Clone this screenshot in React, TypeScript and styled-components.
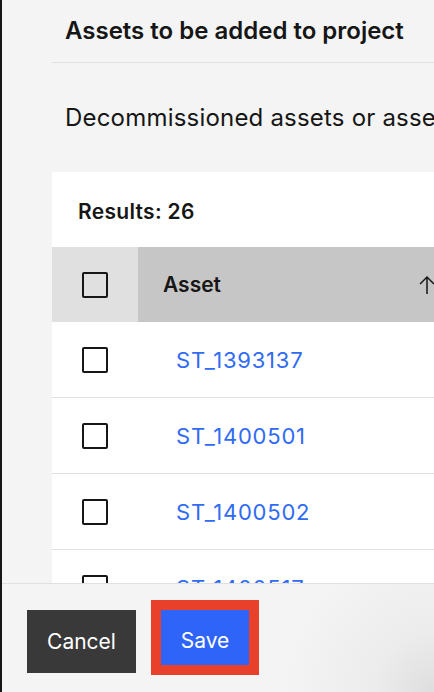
import React from 'react';
import styled, { createGlobalStyle } from 'styled-components';

const GlobalStyle = createGlobalStyle`
  html, body {
    margin: 0;
    padding: 0;
    background: #f4f4f4;
  }
  body {
    font-family: Inter, "Noto Sans", Arial, sans-serif;
    color: #161616;
  }
  * {
    box-sizing: border-box;
  }
`;

const assets = ['ST_1393137', 'ST_1400501', 'ST_1400502', 'ST_1400517'];

const Shell = styled.div`
  display: flex;
  width: 434px;
  height: 692px;
  overflow: hidden;
  background: #f4f4f4;
`;

const Edge = styled.div`
  width: 2px;
  flex: none;
  background: #161616;
`;

const Main = styled.div`
  display: flex;
  flex-direction: column;
  flex: 1;
  min-width: 0;
`;

const Body = styled.div`
  flex: 1;
  overflow: hidden;
  padding-left: 50px;
`;

const Header = styled.div`
  display: flex;
  align-items: center;
  height: 63px;
  padding: 0 0 1px 13px;
  border-bottom: 1px solid #e0e0e0;
`;

const Title = styled.h2`
  margin: 0;
  font-size: 24px;
  font-weight: 600;
  line-height: 30px;
  white-space: nowrap;
`;

const Description = styled.p`
  display: flex;
  align-items: center;
  height: 109px;
  margin: 0;
  padding-left: 13px;
  font-size: 24px;
  font-weight: 400;
  letter-spacing: 0.2px;
  white-space: nowrap;
`;

const Card = styled.div`
  width: 420px;
  background: #ffffff;
`;

const Toolbar = styled.div`
  display: flex;
  align-items: center;
  height: 75px;
  padding: 4px 0 0 26px;
  font-size: 21px;
  font-weight: 600;
  letter-spacing: 0.3px;
`;

const HeaderRow = styled.div`
  display: flex;
  height: 75px;
`;

const Row = styled.div`
  display: flex;
  height: 76px;
  border-bottom: 1px solid #e0e0e0;
`;

const SelectCell = styled.div<{ $head?: boolean }>`
  display: flex;
  align-items: center;
  width: 86px;
  flex: none;
  padding-left: 30px;
  background: ${p => (p.$head ? '#e0e0e0' : 'transparent')};
`;

const SortCell = styled.div`
  display: flex;
  align-items: center;
  flex: 1;
  padding: 0 33px 0 25px;
  background: #c6c6c6;
  font-size: 21px;
  font-weight: 600;
`;

const SortIcon = styled.svg`
  margin-left: auto;
  width: 24px;
  height: 24px;
  fill: #161616;
`;

const LinkCell = styled.div`
  display: flex;
  align-items: center;
  flex: 1;
  padding-left: 38px;
`;

const AssetLink = styled.a`
  color: #2f6bf5;
  font-size: 22px;
  text-decoration: none;
  letter-spacing: 0.8px;
`;

const Checkbox = styled.span`
  display: block;
  width: 26px;
  height: 26px;
  border: 2px solid #161616;
  border-radius: 2px;
`;

const Footer = styled.div`
  display: flex;
  align-items: flex-start;
  height: 109px;
  flex: none;
  padding: 26px 0 0 25px;
  border-top: 1px solid #e0e0e0;
  background: radial-gradient(circle at 100% 100%, #dedede 0, #ececec 60px, #f4f4f4 150px);
`;

const Button = styled.button<{ $kind: 'secondary' | 'primary' }>`
  display: flex;
  align-items: center;
  justify-content: center;
  width: ${p => (p.$kind === 'primary' ? '88px' : '109px')};
  height: ${p => (p.$kind === 'primary' ? '55px' : '63px')};
  border: none;
  border-radius: 0;
  padding: ${p => (p.$kind === 'primary' ? '5px 0 0' : '0')};
  background: ${p => (p.$kind === 'primary' ? '#2e64f7' : '#393939')};
  color: #ffffff;
  font-family: inherit;
  font-size: 21px;
  font-weight: 400;
  cursor: pointer;
`;

const Highlight = styled.div`
  margin: -10px 0 0 15px;
  border: 10px solid #e8402a;
`;

export default function App() {
  return (
    <>
      <GlobalStyle />
      <Shell>
        <Edge />
        <Main>
          <Body>
            <Header>
              <Title>Assets to be added to project</Title>
            </Header>
            <Description>
              Decommissioned assets or assets already in a project will not be added.
            </Description>
            <Card>
              <Toolbar>Results: 26</Toolbar>
              <HeaderRow>
                <SelectCell $head>
                  <Checkbox />
                </SelectCell>
                <SortCell>
                  Asset
                  <SortIcon viewBox="0 0 32 32">
                    <path d="M16 4 6 14l1.41 1.41L15 7.83V28h2V7.83l7.59 7.58L26 14 16 4z" />
                  </SortIcon>
                </SortCell>
              </HeaderRow>
              {assets.map(id => (
                <Row key={id}>
                  <SelectCell>
                    <Checkbox />
                  </SelectCell>
                  <LinkCell>
                    <AssetLink href="#">{id}</AssetLink>
                  </LinkCell>
                </Row>
              ))}
            </Card>
          </Body>
          <Footer>
            <Button $kind="secondary">Cancel</Button>
            <Highlight>
              <Button $kind="primary">Save</Button>
            </Highlight>
          </Footer>
        </Main>
      </Shell>
    </>
  );
}
